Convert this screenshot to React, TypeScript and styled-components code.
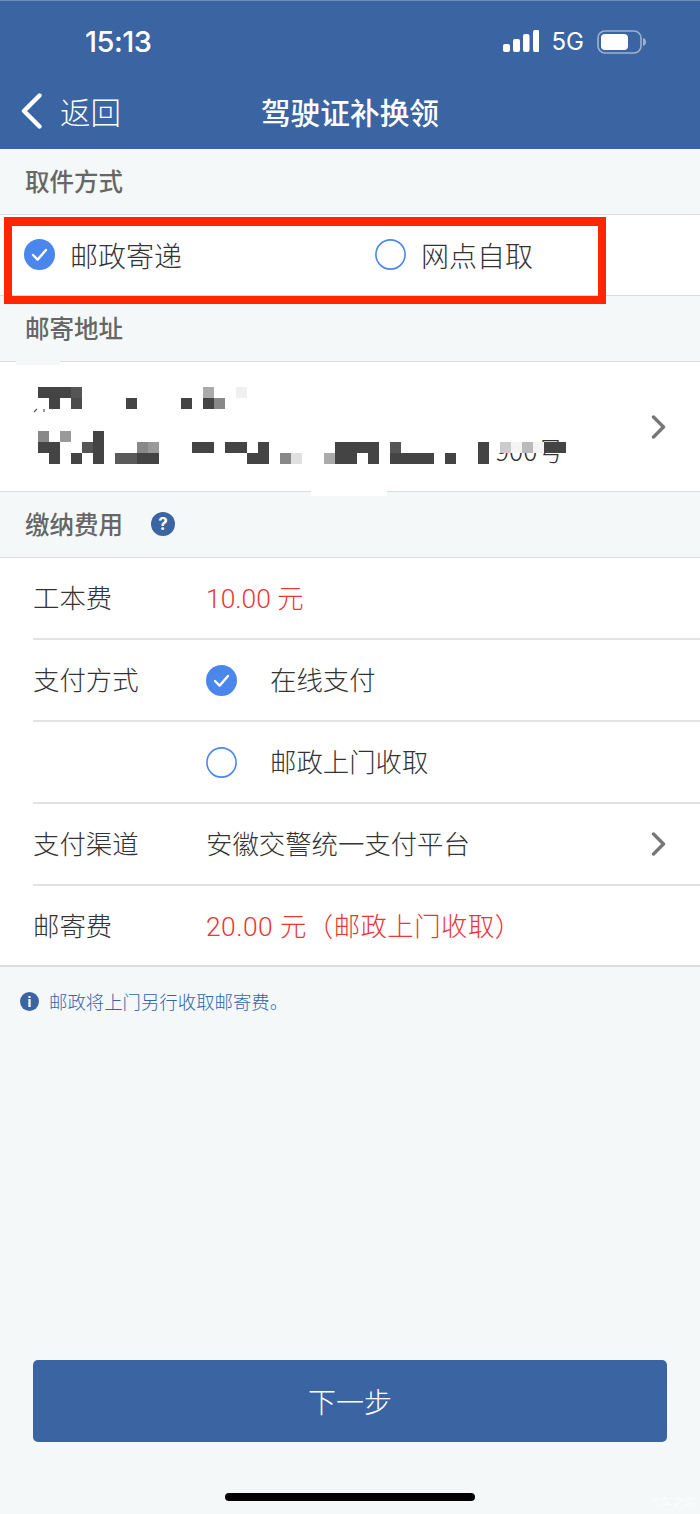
import React from 'react'
import styled, { createGlobalStyle } from 'styled-components'

const GlobalStyle = createGlobalStyle`
  html, body {
    margin: 0;
    padding: 0;
    background: #f4f8f9;
    font-family: 'Inter', 'Noto Sans CJK SC', sans-serif;
  }
  * {
    box-sizing: border-box;
  }
`

const Page = styled.div`
  position: relative;
  width: 700px;
  height: 1514px;
  display: flex;
  flex-direction: column;
  background: #f4f8f9;
  overflow: hidden;
`

const Header = styled.header`
  background: #3b64a2;
  height: 149px;
  display: flex;
  flex-direction: column;
  color: white;
  border-top: 1px solid #6c8bb8;
`

const StatusBar = styled.div`
  height: 83px;
  display: flex;
  align-items: center;
  justify-content: space-between;
  padding: 0 53px 2px 85px;
`

const Time = styled.span`
  font-family: 'Inter', sans-serif;
  font-size: 29px;
  font-weight: 500;
  letter-spacing: -0.5px;
`

const StatusIcons = styled.div`
  display: flex;
  align-items: center;
  gap: 13px;
`

const Network = styled.span`
  font-family: 'Inter', sans-serif;
  font-size: 24px;
`

const NavBar = styled.nav`
  position: relative;
  height: 65px;
  display: flex;
  align-items: center;
  justify-content: center;
  padding-bottom: 11px;
`

const BackLink = styled.a`
  position: absolute;
  left: 21px;
  top: 5px;
  display: flex;
  align-items: center;
  gap: 18px;
  font-family: 'Noto Sans CJK SC', sans-serif;
  font-size: 30.5px;
  font-weight: 300;
`

const Title = styled.h1`
  margin: 0;
  font-family: 'Noto Sans CJK SC', sans-serif;
  font-size: 29.7px;
  font-weight: 500;
`

const SectionHeading = styled.div`
  height: 65px;
  display: flex;
  align-items: center;
  gap: 28px;
  padding: 0 0 2px 25px;
  font-family: 'Noto Sans CJK SC', sans-serif;
  font-size: 24.5px;
  font-weight: 500;
  color: #666;
`

const DeliveryRow = styled.div`
  position: relative;
  height: 82px;
  display: flex;
  align-items: center;
  background: white;
  border-top: 1px solid #dcdcdc;
  border-bottom: 1px solid #dcdcdc;
`

const DeliveryOption = styled.div<{ $width: number }>`
  width: ${p => p.$width}px;
  padding-left: 24px;
  display: flex;
  align-items: center;
  gap: 15px;
  font-family: 'Noto Sans CJK SC', sans-serif;
  font-size: 28px;
  font-weight: 300;
  color: #333;
  svg {
    margin-bottom: 2px;
  }
`

const Highlight = styled.div`
  position: absolute;
  left: 4px;
  top: 2px;
  width: 602px;
  height: 87px;
  border: 8px solid #ff2600;
  border-top-width: 9px;
  pointer-events: none;
`

const AddressRow = styled.div`
  position: relative;
  height: 131px;
  display: flex;
  align-items: flex-end;
  justify-content: space-between;
  background: white;
  border-top: 1px solid #dcdcdc;
  border-bottom: 1px solid #dcdcdc;
`

const AddressTail = styled.span`
  padding: 0 0 27px 495px;
  font-family: 'Noto Sans CJK SC', sans-serif;
  font-size: 26.4px;
  line-height: 28px;
  font-weight: 300;
  color: #333;
`

const AddressArrow = styled.span`
  position: absolute;
  right: 34px;
  top: 53px;
  display: flex;
`

const Mosaic = styled.svg`
  position: absolute;
  left: 0;
  top: 0;
`

const TopPatch = styled.div`
  position: absolute;
  left: 16px;
  top: -1px;
  width: 44px;
  height: 4px;
  background: #f4f8f9;
`

const BottomPatch = styled.div`
  position: absolute;
  left: 311px;
  bottom: -5px;
  width: 76px;
  height: 6px;
  background: white;
`

const FeeList = styled.div`
  background: white;
  border-top: 1px solid #dcdcdc;
  border-bottom: 2px solid #dcdcdc;
`

const FeeRow = styled.div<{ $last?: boolean }>`
  position: relative;
  height: ${p => (p.$last ? '79px' : '82px')};
  margin-left: 33px;
  display: flex;
  align-items: center;
  padding-bottom: ${p => (p.$last ? '3px' : '4px')};
  border-bottom: ${p => (p.$last ? 'none' : '2px solid #e2e2e2')};
  font-family: 'Noto Sans CJK SC', sans-serif;
  font-size: 26.4px;
  font-weight: 300;
  color: #333;
`

const FeeLabel = styled.span`
  width: 173px;
  flex-shrink: 0;
`

const PayOption = styled.div`
  display: flex;
  align-items: center;
  gap: 33px;
  svg {
    margin-top: 4px;
  }
`

const Price = styled.span<{ $spaced?: boolean }>`
  color: #ec3535;
  font-family: 'Roboto', 'Noto Sans CJK SC', sans-serif;
  font-weight: 300;
  letter-spacing: ${p => (p.$spaced ? '0.45px' : '0')};
`

const RowArrow = styled.span`
  position: absolute;
  right: 34px;
  top: 28px;
  display: flex;
`

const Note = styled.div`
  display: flex;
  align-items: center;
  gap: 10px;
  padding: 21px 0 0 20px;
  font-family: 'Noto Sans CJK SC', sans-serif;
  font-size: 18.4px;
  font-weight: 300;
  color: #2f66aa;
`

const HelpBadge = styled.span`
  width: 24px;
  height: 24px;
  border-radius: 50%;
  background: #3b64a2;
  color: white;
  display: flex;
  align-items: center;
  justify-content: center;
  font-family: 'Inter', sans-serif;
  font-size: 17px;
  font-weight: 700;
`

const InfoBadge = styled(HelpBadge)`
  width: 19px;
  height: 19px;
  font-size: 14px;
`

const NextButton = styled.button`
  margin: auto 33px 51px;
  height: 82px;
  border: none;
  border-radius: 5px;
  background: #3b64a2;
  color: white;
  font-family: 'Noto Sans CJK SC', sans-serif;
  font-size: 28px;
  font-weight: 300;
`

const HomeBar = styled.div`
  width: 250px;
  height: 8px;
  margin: 0 auto 13px;
  border-radius: 4px;
  background: black;
`

const Watermark = styled.span`
  position: absolute;
  right: 4px;
  bottom: 4px;
  font-family: 'Noto Sans CJK SC', sans-serif;
  font-size: 12px;
  font-weight: 300;
  color: rgba(255, 255, 255, 0.9);
`

const Check = ({ on }: { on?: boolean }) => (
  <svg width='31' height='31' viewBox='0 0 31 31'>
    {on ? (
      <>
        <circle cx='15.5' cy='15.5' r='15.5' fill='#4a86ec' />
        <path d='M9 16l4.6 4.6L22 11' fill='none' stroke='white' strokeWidth='2.4' strokeLinecap='round' strokeLinejoin='round' />
      </>
    ) : (
      <circle cx='15.5' cy='15.5' r='14.6' fill='white' stroke='#4a86ec' strokeWidth='1.6' />
    )}
  </svg>
)

const Chevron = () => (
  <svg width='15' height='24' viewBox='0 0 15 24'>
    <path d='M2.5 2l10 10-10 10' fill='none' stroke='#777' strokeWidth='3.4' strokeLinecap='round' strokeLinejoin='round' />
  </svg>
)

const StatusGlyphs = () => (
  <StatusIcons>
    <svg width='36' height='23' viewBox='0 0 36 23'>
      <rect x='0' y='14' width='7' height='8' rx='2' fill='white' />
      <rect x='10' y='9' width='7' height='13' rx='2' fill='white' />
      <rect x='20' y='4' width='6.5' height='18' rx='2' fill='white' />
      <rect x='30' y='0' width='6.5' height='22' rx='2' fill='white' />
    </svg>
    <Network>5G</Network>
    <svg width='50' height='24' viewBox='0 0 50 24'>
      <rect x='1' y='1' width='43' height='22' rx='7' fill='none' stroke='rgba(255,255,255,0.5)' strokeWidth='1.6' />
      <rect x='4' y='4' width='27' height='16' rx='4' fill='white' />
      <path d='M46 8c2 .5 3 2 3 4s-1 3.500-3 4z' fill='rgba(255,255,255,0.5)' />
    </svg>
  </StatusIcons>
)

// mosaic blocks of the blurred address: [row, column, colour, span]
const blocks: [number, number, string, number?][] = [
  [0, 0, '#444', 3], [0, 3, '#555'], [0, 15, '#aaa'], [0, 18, '#f0f0f0'],
  [1, 1, '#444'], [1, 3, '#4c4c4c'], [1, 8, '#444'], [1, 13, '#444'], [1, 15, '#444'], [1, 16, '#888'],
  [4, 0, '#888'], [4, 2, '#999'], [4, 5, '#444'],
  [5, 0, '#444', 2], [5, 4, '#555'], [5, 5, '#444'], [5, 9, '#888'], [5, 10, '#999'],
  [5, 14, '#444', 2], [5, 17, '#444', 2], [5, 20, '#444'], [5, 27, '#444', 4], [5, 32, '#555'],
  [5, 40, '#444'], [5, 41, '#fff'], [5, 42, '#ccc'], [5, 43, '#f4f4f4'], [5, 44, '#bbb'], [5, 45, '#f4f4f4'], [5, 46, '#444', 2],
  [6, 1, '#444'], [6, 3, '#444'], [6, 5, '#444'], [6, 7, '#5a5a5a', 2], [6, 9, '#444', 2],
  [6, 19, '#444', 2], [6, 22, '#888'], [6, 23, '#e0e0e0'], [6, 26, '#aaa'], [6, 27, '#444', 2], [6, 30, '#444'],
  [6, 32, '#444', 4], [6, 37, '#444'], [6, 40, '#444'],
]

const App = () => {
  return (
    <Page>
      <GlobalStyle />
      <Header>
        <StatusBar>
          <Time>15:13</Time>
          <StatusGlyphs />
        </StatusBar>
        <NavBar>
          <BackLink>
            <svg width='21' height='36' viewBox='0 0 21 36'>
              <path d='M18.500 2.500L3 18l15.500 15.500' fill='none' stroke='white' strokeWidth='4.400' strokeLinecap='round' strokeLinejoin='round' />
            </svg>
            返回
          </BackLink>
          <Title>驾驶证补换领</Title>
        </NavBar>
      </Header>

      <SectionHeading>取件方式</SectionHeading>
      <DeliveryRow>
        <DeliveryOption $width={351}>
          <Check on />
          邮政寄递
        </DeliveryOption>
        <DeliveryOption $width={300}>
          <Check />
          网点自取
        </DeliveryOption>
        <Highlight />
      </DeliveryRow>

      <SectionHeading>邮寄地址</SectionHeading>
      <AddressRow>
        <AddressTail>900号</AddressTail>
        <Mosaic width='700' height='129' viewBox='0 0 700 129'>
          {blocks.map(([row, col, fill, span = 1]) => (
            <rect key={`${row}-${col}`} x={38 + col * 11} y={25 + row * 11} width={span * 11} height={11} fill={fill} />
          ))}
          <path d='M34 413l3-3M44 410v3M50 409l3 1' stroke='#555' strokeWidth='1.2' transform='translate(0 -363)' />
        </Mosaic>
        <AddressArrow>
          <Chevron />
        </AddressArrow>
        <TopPatch />
        <BottomPatch />
      </AddressRow>

      <SectionHeading>
        缴纳费用
        <HelpBadge>?</HelpBadge>
      </SectionHeading>
      <FeeList>
        <FeeRow>
          <FeeLabel>工本费</FeeLabel>
          <Price>10.00 元</Price>
        </FeeRow>
        <FeeRow>
          <FeeLabel>支付方式</FeeLabel>
          <PayOption>
            <Check on />
            在线支付
          </PayOption>
        </FeeRow>
        <FeeRow>
          <FeeLabel />
          <PayOption>
            <Check />
            邮政上门收取
          </PayOption>
        </FeeRow>
        <FeeRow>
          <FeeLabel>支付渠道</FeeLabel>
          安徽交警统一支付平台
          <RowArrow>
            <Chevron />
          </RowArrow>
        </FeeRow>
        <FeeRow $last>
          <FeeLabel>邮寄费</FeeLabel>
          <Price $spaced>20.00 元（邮政上门收取）</Price>
        </FeeRow>
      </FeeList>

      <Note>
        <InfoBadge>i</InfoBadge>
        邮政将上门另行收取邮寄费。
      </Note>

      <NextButton>下一步</NextButton>
      <HomeBar />
      <Watermark>汽车之家</Watermark>
    </Page>
  )
}

export default App
